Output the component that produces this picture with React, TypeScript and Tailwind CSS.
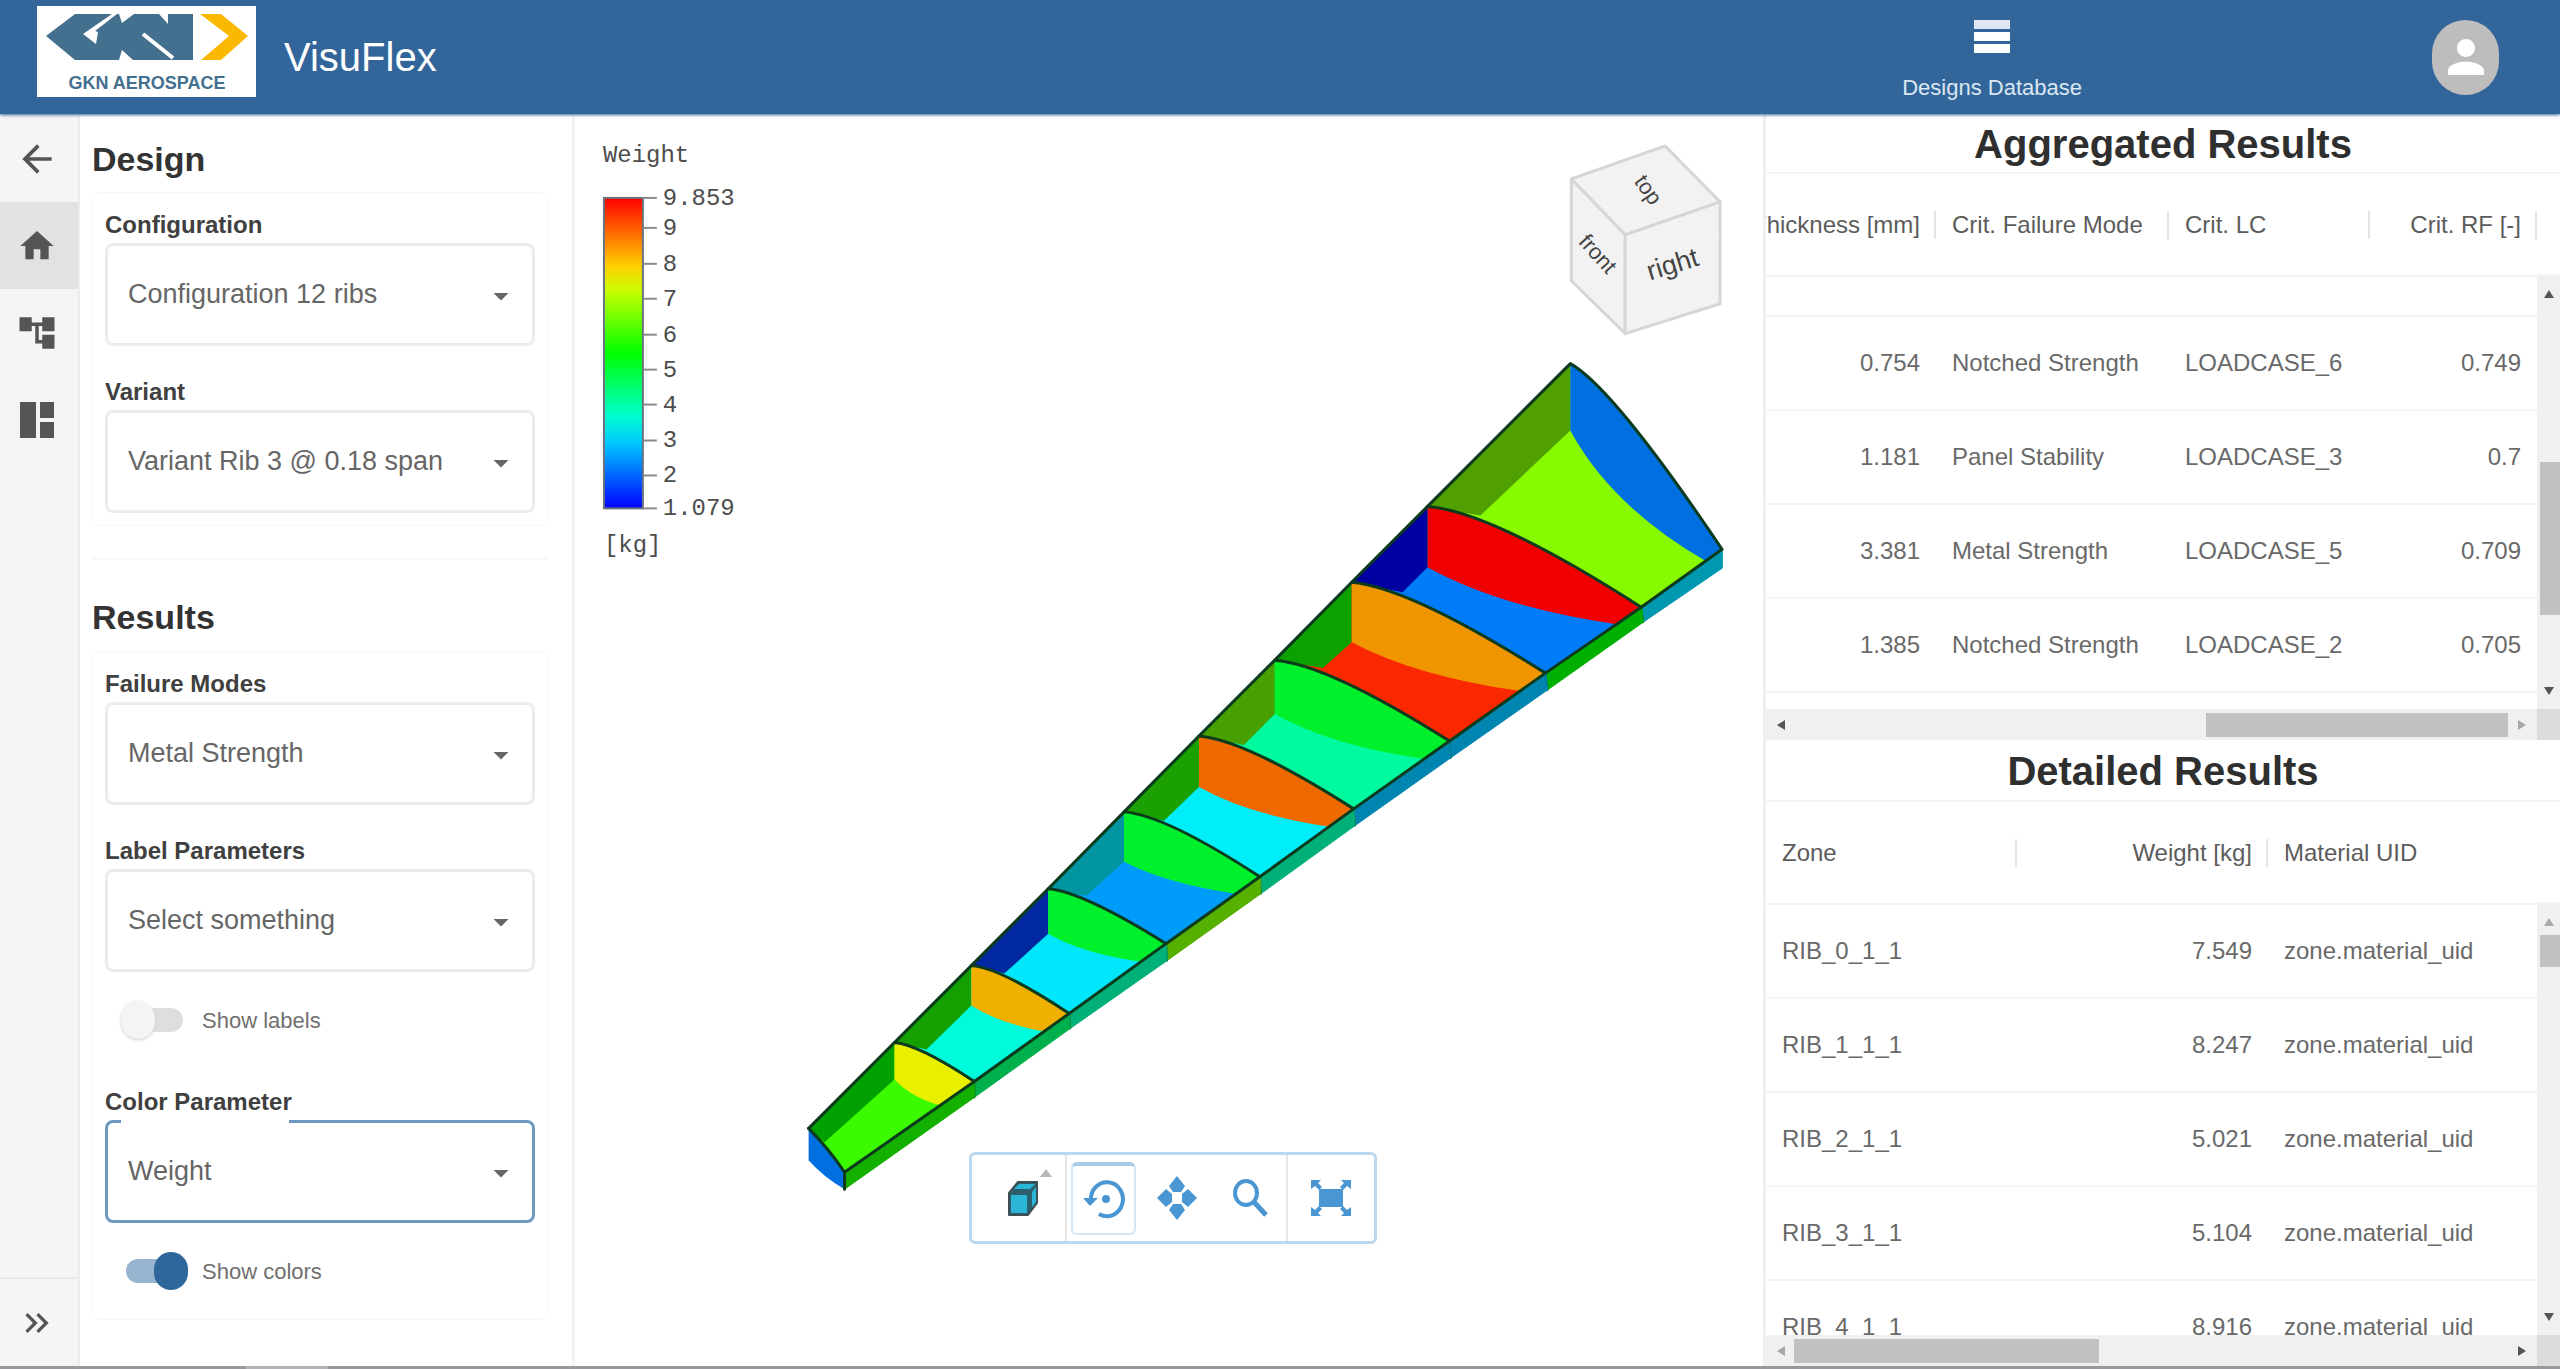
import { useId, useState } from 'react'
import type { ReactNode } from 'react'
import {
  MdAccountTree,
  MdArrowBack,
  MdArrowDropDown,
  MdHome,
  MdKeyboardDoubleArrowRight,
  MdPerson,
} from 'react-icons/md'

type Point = [number, number]

// One rib per entry, from the wing root to the tip:
// left/right ends of the top edge, inner corner below the left end, lower edge of the rear spar
type Rib = { left: Point; right: Point; inner: Point; base: Point }

const RIBS: Rib[] = [
  { left: [1570, 363], right: [1722, 549], inner: [1570, 430], base: [1722, 568] },
  { left: [1427, 506], right: [1641, 607], inner: [1427, 567], base: [1643, 622] },
  { left: [1351, 582], right: [1545, 673], inner: [1351, 642], base: [1547, 690] },
  { left: [1274, 660], right: [1449, 741], inner: [1274, 714], base: [1450, 758] },
  { left: [1198, 736], right: [1353, 809], inner: [1198, 787], base: [1354, 826] },
  { left: [1123, 812], right: [1259, 877], inner: [1123, 862], base: [1260, 894] },
  { left: [1047, 889], right: [1165, 944], inner: [1047, 934], base: [1166, 961] },
  { left: [970, 966], right: [1068, 1014], inner: [970, 1006], base: [1069, 1029] },
  { left: [893, 1043], right: [973, 1082], inner: [893, 1080], base: [973, 1098] },
  { left: [807, 1129], right: [843, 1173], inner: [807, 1161], base: [843, 1190] },
]

// wall = front spar, floor = skin, rib = rib web, spar = rear spar
const BAYS: { wall: string; floor: string; rib: string; spar: string; corner: Point }[] = [
  { wall: '#4fa000', floor: '#88fa00', rib: '#0070e0', spar: '#0098b0', corner: [1480, 515] },
  { wall: '#0000a0', floor: '#007cfa', rib: '#f00000', spar: '#00b000', corner: [1402, 592] },
  { wall: '#0ca000', floor: '#fa2800', rib: '#f09400', spar: '#0085b0', corner: [1322, 668] },
  { wall: '#48a000', floor: '#00faa0', rib: '#00f02c', spar: '#0085b0', corner: [1243, 745] },
  { wall: '#1aa000', floor: '#00eefa', rib: '#f06800', spar: '#00b078', corner: [1163, 821] },
  { wall: '#0095a0', floor: '#009cfa', rib: '#00f02c', spar: '#55b000', corner: [1085, 896] },
  { wall: '#0028a0', floor: '#00e6fa', rib: '#00f02c', spar: '#00b078', corner: [1003, 974] },
  { wall: '#14a000', floor: '#00fadc', rib: '#f0b000', spar: '#00b04c', corner: [925, 1050] },
  { wall: '#00a000', floor: '#3cfa00', rib: '#e8f000', spar: '#14b000', corner: [823, 1143] },
]

const mix = (a: Point, b: Point, tx: number, ty: number): Point => [
  Math.round(a[0] + (b[0] - a[0]) * tx),
  Math.round(a[1] + (b[1] - a[1]) * ty),
]

// Bend of the top edge of a rib; the root and tip ribs are flatter
const bend = (i: number): Point => {
  const { left, right } = RIBS[i]
  if (i === 0) return mix(left, right, 0.28, 0.13)
  if (i === RIBS.length - 1) return mix(left, right, 0.55, 0.45)
  return mix(left, right, 0.3, 0.05)
}

const Wing = () => (
  <g strokeLinejoin="round" strokeLinecap="round">
    {BAYS.map((bay, i) => {
      const a = RIBS[i]
      const b = RIBS[i + 1]
      const end = mix(a.right, b.right, i === 0 ? 0.2 : 0.26, i === 0 ? 0.2 : 0.26)
      const low = i === 0 ? mix(a.inner, end, 0.3, 0.58) : mix(a.inner, end, 0.38, 0.7)
      return (
        <g key={i}>
          <path d={`M${a.right} L${b.right} L${b.base} L${a.base} Z`} fill={bay.spar} stroke={bay.spar} strokeWidth="1" />
          <path
            d={`M${a.left} Q${bend(i)} ${a.right} L${b.right} Q${bend(i + 1)} ${b.left} Z`}
            fill={bay.floor}
          />
          <path d={`M${a.left} L${a.inner} L${bay.corner} L${b.left} Z`} fill={bay.wall} />
          <path d={`M${a.left} Q${bend(i)} ${a.right} L${end} Q${low} ${a.inner} Z`} fill={bay.rib} />
          <path d={`M${b.left} L${a.left} Q${bend(i)} ${a.right} L${b.right}`} fill="none" stroke="#0b3a1c" strokeWidth="3" />
          <path d={`M${b.right} L${b.base}`} stroke="#0b5a3c" strokeWidth="2" />
        </g>
      )
    })}
    <path d="M807 1129 Q827 1149 843 1173 L843 1190 Q822 1178 807 1161 Z" fill="#0070e0" />
    <path d="M807 1129 Q827 1149 843 1173 L843 1190" fill="none" stroke="#0b3a1c" strokeWidth="3" />
  </g>
)

const MAX_WEIGHT = 9.853
const MIN_WEIGHT = 1.079
const TICKS = [9.853, 9, 8, 7, 6, 5, 4, 3, 2, 1.079]

const Legend = () => (
  <g fontFamily="'Liberation Mono', monospace" fontSize="24" fill="#4d4d4d">
    <defs>
      <linearGradient id="weight-scale" x1="0" y1="0" x2="0" y2="1">
        <stop offset="0" stopColor="#ff0000" />
        <stop offset="0.22" stopColor="#ffd000" />
        <stop offset="0.3" stopColor="#c8ff00" />
        <stop offset="0.5" stopColor="#00ff00" />
        <stop offset="0.7" stopColor="#00ffcc" />
        <stop offset="0.79" stopColor="#00c8ff" />
        <stop offset="1" stopColor="#0000ff" />
      </linearGradient>
    </defs>
    <text x="601" y="161">Weight</text>
    <rect x="602" y="197" width="39" height="311" fill="url(#weight-scale)" stroke="#6b7280" strokeWidth="2" />
    {TICKS.map((tick) => {
      const y = Math.round(197 + ((MAX_WEIGHT - tick) / (MAX_WEIGHT - MIN_WEIGHT)) * 311)
      return (
        <g key={tick}>
          <path d={`M641 ${y} H655`} stroke="#8a8a8a" strokeWidth="2" />
          <text x="661" y={y + 7}>{tick}</text>
        </g>
      )
    })}
    <text x="602" y="552">[kg]</text>
  </g>
)

const ViewCube = () => (
  <g fontFamily="'Liberation Sans', sans-serif" fill="#444444" textAnchor="middle">
    <g fill="#f2f2f2" stroke="#d6d6d6" strokeWidth="3" strokeLinejoin="round">
      <path d="M1665 145 L1720 201 L1625 234 L1571 178 Z" />
      <path d="M1571 178 L1625 234 L1625 333 L1571 280 Z" />
      <path d="M1625 234 L1720 201 L1720 303 L1625 333 Z" />
    </g>
    <text transform="translate(1642 193) rotate(55)" fontSize="22">top</text>
    <text transform="translate(1592 258) rotate(48)" fontSize="22">front</text>
    <text transform="translate(1675 272) rotate(-17)" fontSize="27">right</text>
  </g>
)

const ToolButton = ({ label, active, children }: { label: string; active?: boolean; children: ReactNode }) => (
  <button
    type="button"
    aria-label={label}
    className={`relative flex h-[73px] w-[65px] items-center justify-center rounded-md border-2 ${
      active ? 'border-[#d5e6f4] border-t-[#a9cbe8] border-t-4' : 'border-transparent'
    }`}
  >
    {children}
  </button>
)

const Toolbar = () => (
  <div className="absolute bottom-[122px] left-1/2 ml-1 flex h-[92px] w-[408px] -translate-x-1/2 items-center rounded-md border-3 border-[#bcd8ee] bg-white text-[#4a96d2]">
    <div className="flex h-full flex-1 items-center justify-center border-r-2 border-[#e6e6e6] pl-2">
      <ToolButton label="Display mode">
        <svg width="32" height="38" viewBox="0 0 32 38" strokeLinejoin="round">
          <path d="M2 14 L11 3 H30 V24 L21 36 H2 Z" fill="#2b5f6c" stroke="#3d4f55" strokeWidth="2" />
          <path d="M7 10 L12 5 H28 L23 10 Z M25 13 L29 8 V23 L25 28 Z" fill="#2bb5d6" />
          <path d="M4 16 H20 V34 H4 Z" fill="#2bb5d6" />
        </svg>
        <svg className="absolute right-0 top-1" width="14" height="10" viewBox="0 0 14 10">
          <path d="M7 1 L13 9 H1 Z" fill="#b8b8b8" />
        </svg>
      </ToolButton>
    </div>
    <div className="flex h-full items-center gap-2 border-r-2 border-[#e6e6e6] px-1">
      <ToolButton label="Rotate" active>
        <svg width="44" height="44" viewBox="0 0 44 44" fill="none" stroke="currentColor" strokeWidth="4">
          <path d="M9 24 A16 17 0 1 1 17 37" />
          <path d="M1 21 H16 L8 29 Z" fill="currentColor" stroke="none" />
          <circle cx="24" cy="22" r="4" fill="currentColor" stroke="none" />
        </svg>
      </ToolButton>
      <ToolButton label="Pan">
        <svg width="42" height="46" viewBox="0 0 42 46" fill="currentColor">
          <path d="M21 1 L29 11 L25 17 H17 L13 11 Z" />
          <path d="M21 45 L29 35 L25 29 H17 L13 35 Z" />
          <path d="M1 23 L10 14 L16 19 V27 L10 32 Z" />
          <path d="M41 23 L32 14 L26 19 V27 L32 32 Z" />
        </svg>
      </ToolButton>
      <ToolButton label="Zoom">
        <svg width="38" height="40" viewBox="0 0 38 40" fill="none" stroke="currentColor">
          <ellipse cx="15" cy="15" rx="11" ry="12" strokeWidth="4" />
          <path d="M23 24 L35 37" strokeWidth="5" />
        </svg>
      </ToolButton>
    </div>
    <div className="flex h-full w-[86px] items-center justify-center">
      <ToolButton label="Fit to view">
        <svg width="42" height="38" viewBox="0 0 42 38" fill="currentColor">
          <rect x="9" y="10" width="24" height="18" />
          <path d="M1 1 H11 L8 4 L12 8 L9 11 L5 7 L1 10 Z" />
          <path d="M41 1 H31 L34 4 L30 8 L33 11 L37 7 L41 10 Z" />
          <path d="M1 37 H11 L8 34 L12 30 L9 27 L5 31 L1 28 Z" />
          <path d="M41 37 H31 L34 34 L30 30 L33 27 L37 31 L41 28 Z" />
        </svg>
      </ToolButton>
    </div>
  </div>
)

const Viewer = () => (
  <main className="relative min-w-0 flex-1">
    <svg className="block h-full w-full" viewBox="573 114 1190 1252" role="img" aria-label="Weight per wing bay">
      <Legend />
      <Wing />
      <ViewCube />
    </svg>
    <Toolbar />
  </main>
)

const Logo = () => (
  <svg className="h-[91px] w-[219px] bg-white" viewBox="0 0 219 91" role="img" aria-label="GKN Aerospace">
    <path
      d="M9 30 L38 8 H74 L82 8 L85 17 L97 8 H122 L131 18 V8 H156 V54 H134 L96 54 L85 44 L82 54 H38 Z"
      fill="#44708f"
    />
    <path d="M75 8 L46 28 L59 38 L61 26 L58 25 L80 8 Z" fill="#ffffff" />
    <path d="M106 28 L136 52" stroke="#ffffff" strokeWidth="4" />
    <path d="M163 8 H184 L211 30 L184 54 H164 L192 30 Z" fill="#fbb800" />
    <text
      x="110"
      y="83"
      textAnchor="middle"
      fontFamily="'Liberation Sans', sans-serif"
      fontWeight="700"
      fontSize="18"
      fill="#44708f"
    >
      GKN AEROSPACE
    </text>
  </svg>
)

const Header = () => (
  <header className="z-10 flex h-[114px] shrink-0 items-center bg-[#32669a] pl-[37px] pr-[61px] text-white shadow-[0_1px_3px_#32669a]">
    <div className="flex h-full items-center gap-7">
      <div className="pb-3">
        <Logo />
      </div>
      <h1 className="text-[40px] leading-none">VisuFlex</h1>
    </div>
    <a href="#designs" className="ml-auto mr-[350px] flex flex-col items-center gap-5 pt-2 text-[22px] leading-7 text-[#dbe7f3]">
      <svg width="36" height="34" viewBox="0 0 36 34" fill="#ffffff">
        <rect width="36" height="9" fill="#dfe7f5" />
        <rect y="12" width="36" height="9" />
        <rect y="24" width="36" height="9" />
      </svg>
      Designs Database
    </a>
    <button
      type="button"
      aria-label="Account"
      className="flex h-[75px] w-[67px] items-center justify-center rounded-full bg-[#bdbdbd]"
    >
      <MdPerson size={54} />
    </button>
  </header>
)

const RailButton = ({ label, active, children }: { label: string; active?: boolean; children: ReactNode }) => (
  <button
    type="button"
    aria-label={label}
    className={`flex h-[87px] w-full items-center justify-center pr-1 text-[#555555] ${active ? 'bg-[#e2e2e2]' : ''}`}
  >
    {children}
  </button>
)

const Rail = () => (
  <nav className="flex w-[80px] shrink-0 flex-col border-r-2 border-[#ececec] bg-[#f5f5f5] pt-px">
    <RailButton label="Back">
      <MdArrowBack size={44} />
    </RailButton>
    <RailButton label="Home" active>
      <MdHome size={40} />
    </RailButton>
    <RailButton label="Tree">
      <MdAccountTree size={42} />
    </RailButton>
    <RailButton label="Dashboard">
      <svg width="34" height="36" viewBox="0 0 34 36" fill="currentColor">
        <rect width="16" height="36" />
        <rect x="20" width="14" height="16" />
        <rect x="20" y="20" width="14" height="16" />
      </svg>
    </RailButton>
    <div className="mt-auto border-t-2 border-[#e8e8e8]">
      <RailButton label="Expand">
        <MdKeyboardDoubleArrowRight size={40} />
      </RailButton>
    </div>
  </nav>
)

const SelectField = ({ label, value, focused }: { label: string; value: string; focused?: boolean }) => {
  const id = useId()
  return (
    <div>
      <label htmlFor={id} className="mb-1 block text-[24px] font-bold leading-7 text-[#404040]">
        {label}
      </label>
      <div className="relative">
        <select
          id={id}
          className={`h-[103px] w-full appearance-none rounded-lg border-3 bg-white pl-5 text-[27px] text-[#666666] outline-none ${
            focused ? 'border-[#6d99c3]' : 'border-[#ececec]'
          }`}
        >
          <option>{value}</option>
        </select>
        {focused && <span className="absolute left-4 top-0 h-[3px] w-[168px] bg-white" />}
        <MdArrowDropDown size={36} className="pointer-events-none absolute right-4 top-[35px] text-[#666666]" />
      </div>
    </div>
  )
}

const Toggle = ({ label, initial }: { label: string; initial: boolean }) => {
  const [on, setOn] = useState(initial)
  return (
    <label className="flex h-8 items-center pl-4 text-[22px] text-[#707070]">
      <input type="checkbox" className="sr-only" checked={on} onChange={() => setOn(!on)} />
      <span className={`mr-[14px] flex w-[67px] items-center ${on ? 'justify-end' : 'justify-start'}`}>
        <span className={`flex h-6 w-[62px] items-center rounded-full ${on ? 'justify-end bg-[#98b4cf]' : 'justify-start bg-[#dedede]'}`}>
          <span className={`h-[38px] w-[34px] shrink-0 rounded-full ${on ? 'bg-[#2f679c]' : 'bg-[#f4f4f4] shadow-[0_1px_3px_#cccccc]'}`} />
        </span>
      </span>
      {label}
    </label>
  )
}

const Controls = () => (
  <aside className="w-[495px] shrink-0 border-r-3 border-[#f2f2f2] pl-3 pr-6">
    <h2 className="flex h-[78px] items-center pt-3 text-[34px] font-bold text-[#333333]">Design</h2>
    <section className="flex flex-col gap-8 rounded-lg border border-[#f8f8f8] px-3 pb-3 pt-[18px]">
      <SelectField label="Configuration" value="Configuration 12 ribs" />
      <SelectField label="Variant" value="Variant Rib 3 @ 0.18 span" />
    </section>
    <h2 className="mt-8 flex h-[93px] items-center border-t-2 border-[#f8f8f8] pt-6 text-[34px] font-bold text-[#333333]">
      Results
    </h2>
    <section className="flex flex-col rounded-lg border border-[#f8f8f8] px-3 pb-8 pt-[18px]">
      <SelectField label="Failure Modes" value="Metal Strength" />
      <div className="my-8">
        <SelectField label="Label Parameters" value="Select something" />
      </div>
      <Toggle label="Show labels" initial={false} />
      <div className="mb-8 mt-[52px]">
        <SelectField label="Color Parameter" value="Weight" focused />
      </div>
      <Toggle label="Show colors" initial />
    </section>
  </aside>
)

type Column = { title: string; right?: boolean; width: string }

const AGGREGATED_COLUMNS: Column[] = [
  { title: 'Thickness [mm]', right: true, width: 'w-[170px]' },
  { title: 'Crit. Failure Mode', width: 'w-[233px]' },
  { title: 'Crit. LC', width: 'w-[201px]' },
  { title: 'Crit. RF [-]', right: true, width: 'w-auto' },
]

const AGGREGATED_ROWS = [
  ['0.754', 'Notched Strength', 'LOADCASE_6', '0.749'],
  ['1.181', 'Panel Stability', 'LOADCASE_3', '0.7'],
  ['3.381', 'Metal Strength', 'LOADCASE_5', '0.709'],
  ['1.385', 'Notched Strength', 'LOADCASE_2', '0.705'],
]

const DETAILED_COLUMNS: Column[] = [
  { title: 'Zone', width: 'w-[251px]' },
  { title: 'Weight [kg]', right: true, width: 'w-[251px]' },
  { title: 'Material UID', width: 'w-auto' },
]

const DETAILED_ROWS = [
  ['RIB_0_1_1', '7.549', 'zone.material_uid'],
  ['RIB_1_1_1', '8.247', 'zone.material_uid'],
  ['RIB_2_1_1', '5.021', 'zone.material_uid'],
  ['RIB_3_1_1', '5.104', 'zone.material_uid'],
  ['RIB_4_1_1', '8.916', 'zone.material_uid'],
]

const Arrow = ({ className = '', dim }: { className?: string; dim?: boolean }) => (
  <svg className={`shrink-0 ${className}`} width="10" height="8" viewBox="0 0 10 8">
    <path d="M5 0 L10 8 H0 Z" fill={dim ? '#a8a8a8' : '#555555'} />
  </svg>
)

type GridProps = {
  columns: Column[]
  rows: string[][]
  scrolled?: boolean
  vThumb: string
  hThumb: string
}

const ResultGrid = ({ columns, rows, scrolled, vThumb, hThumb }: GridProps) => (
  <>
    <div className="flex min-h-0 flex-1 overflow-hidden border-t-2 border-[#f5f5f5]">
      <div className="min-w-0 flex-1">
        <table className="w-full table-fixed border-collapse text-[24px] text-[#696969]">
          <thead>
            <tr className="h-[102px] border-b-2 border-[#f3f3f3]">
              {columns.map((column, i) => (
                <th key={column.title} className={`p-0 font-normal text-[#5c5c5c] ${column.width}`}>
                  <div
                    className={`flex h-7 items-center overflow-hidden whitespace-nowrap ${
                      column.right ? 'justify-end pr-[14px]' : 'pl-4'
                    } ${!scrolled && i === columns.length - 1 ? '' : 'border-r-2 border-[#e4e4e4]'}`}
                  >
                    {column.title}
                  </div>
                </th>
              ))}
            </tr>
          </thead>
          <tbody>
            {scrolled && (
              <tr className="h-[40px] border-b-2 border-[#f3f3f3]">
                <td colSpan={columns.length} />
              </tr>
            )}
            {rows.map((row) => (
              <tr key={row.join()} className="h-[94px] border-b-2 border-[#f5f5f5]">
                {row.map((cell, i) => (
                  <td key={i} className={`whitespace-nowrap px-4 ${columns[i].right ? 'text-right' : ''}`}>
                    {cell}
                  </td>
                ))}
              </tr>
            ))}
          </tbody>
        </table>
      </div>
      <div className="flex w-[23px] flex-col">
        <div className="h-[102px] shrink-0 border-b-2 border-[#f3f3f3]" />
        <div className="flex flex-1 flex-col items-center bg-[#f0f0f0] py-[14px]">
          <Arrow dim={!scrolled} />
          <div className={`ml-auto w-5 bg-[#c1c1c1] ${vThumb}`} />
          <Arrow className="mt-auto rotate-180" />
        </div>
      </div>
    </div>
    <div className="flex h-[31px] shrink-0 bg-[#f0f0f0]">
      <div className="flex flex-1 items-center px-[10px]">
        <Arrow className="-rotate-90" dim={!scrolled} />
        <div className={`h-6 bg-[#c1c1c1] ${hThumb}`} />
        <Arrow className="ml-auto rotate-90" dim={scrolled} />
      </div>
      <div className="w-[23px] bg-[#dcdcdc]" />
    </div>
  </>
)

const Results = () => (
  <aside className="flex w-[797px] shrink-0 flex-col border-l-3 border-[#efefef]">
    <section className="flex h-[626px] shrink-0 flex-col">
      <h2 className="h-[58px] text-center text-[40px] font-bold leading-[60px] text-[#2f2f2f]">Aggregated Results</h2>
      <ResultGrid
        columns={AGGREGATED_COLUMNS}
        rows={AGGREGATED_ROWS}
        scrolled
        vThumb="mt-[164px] h-[153px]"
        hThumb="ml-[420px] w-[302px]"
      />
    </section>
    <section className="flex min-h-0 flex-1 flex-col">
      <h2 className="h-[60px] text-center text-[40px] font-bold leading-[62px] text-[#2f2f2f]">Detailed Results</h2>
      <ResultGrid
        columns={DETAILED_COLUMNS}
        rows={DETAILED_ROWS}
        vThumb="mt-[9px] h-8"
        hThumb="ml-2 w-[305px]"
      />
    </section>
  </aside>
)

const App = () => (
  <div className="flex h-screen flex-col overflow-hidden bg-white font-['Liberation_Sans',Arial,sans-serif]">
    <Header />
    <div className="flex min-h-0 flex-1">
      <Rail />
      <Controls />
      <Viewer />
      <Results />
    </div>
    <div className="flex h-[3px] shrink-0 bg-[#98999d] pl-[246px]">
      <div className="w-[82px] bg-[#b4b4b8]" />
    </div>
  </div>
)

export default App
